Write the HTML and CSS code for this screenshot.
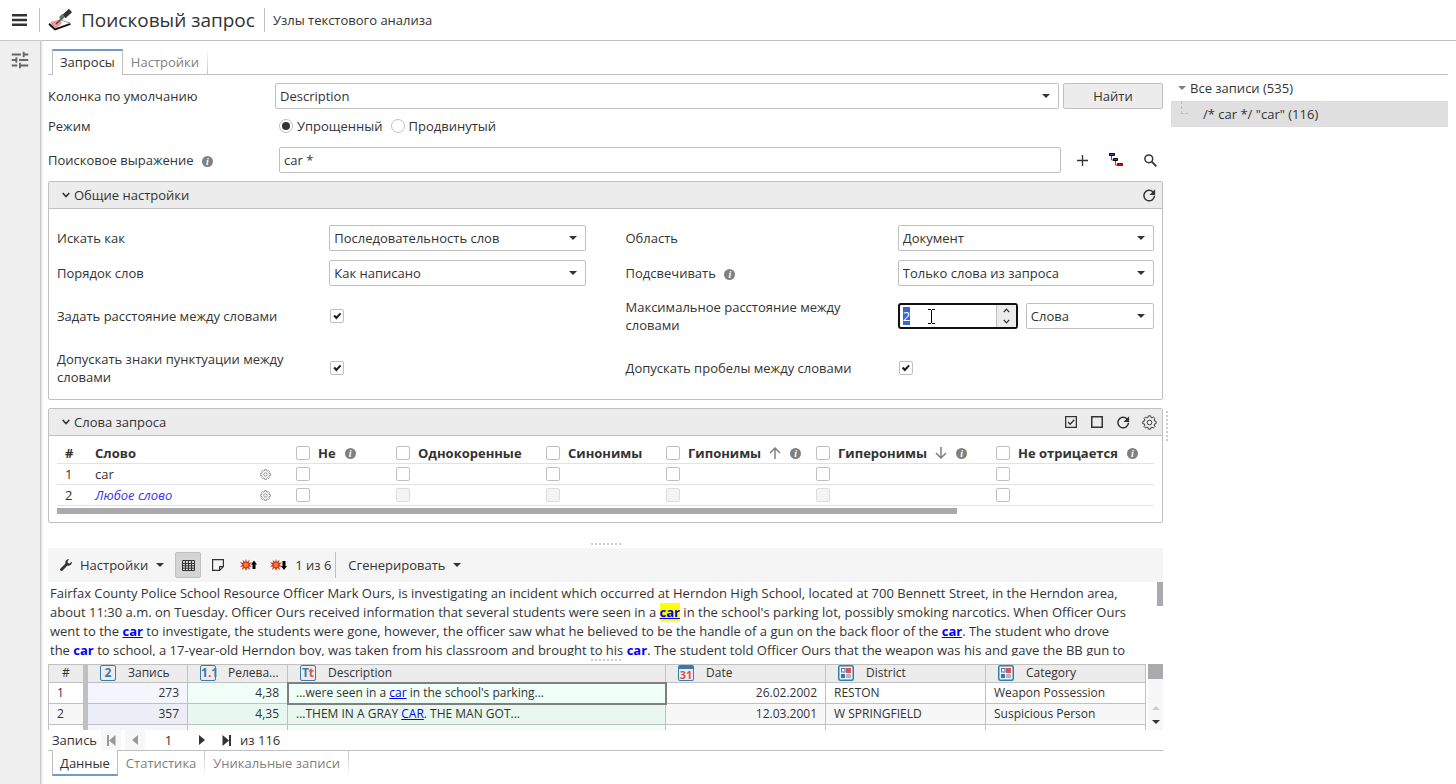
FILE: index.html
```html
<!DOCTYPE html>
<html lang="ru">
<head>
<meta charset="utf-8">
<title>Поисковый запрос</title>
<link rel="stylesheet" href="styles.css">
</head>
<body>
<svg class="sprite" aria-hidden="true">
  <symbol id="arrow" viewBox="0 0 8 4"><path d="M0 0h8L4 4z"/></symbol>
  <symbol id="chevron" viewBox="0 0 8 6"><path d="M.7 1l3.3 3.6L7.3 1" fill="none" stroke="currentColor" stroke-width="1.6"/></symbol>
  <symbol id="refresh" viewBox="0 0 24 24"><path d="M20 12.5a8.5 8.5 0 1 1-2.6-6.6l1.2 1.3" fill="none" stroke="currentColor" stroke-width="2.4"/><path d="M21 2v9h-9z"/></symbol>
  <symbol id="gear" viewBox="0 0 16 16"><g fill="none" stroke="currentColor"><path d="M6.46 2.62L6.75.91H9.25L9.54 2.62L10.71 3.11L12.13 2.1L13.9 3.87L12.89 5.29L13.38 6.46L15.09 6.75V9.25L13.38 9.54L12.89 10.71L13.9 12.13L12.13 13.9L10.71 12.89L9.54 13.38L9.25 15.09H6.75L6.46 13.38L5.29 12.89L3.87 13.9L2.1 12.13L3.11 10.71L2.62 9.54L.91 9.25V6.75L2.62 6.46L3.11 5.29L2.1 3.87L3.87 2.1L5.29 3.11Z"/><circle cx="8" cy="8" r="2.5"/></g></symbol>
  <symbol id="burst" viewBox="0 0 12 12"><path d="M6 0l1 3 2.6-2.4-.8 3.2L12 3.4 9.6 5.8 12 7.4l-3 .4 1.2 3.2L7.2 9 6 12 4.8 9 1.8 11 3 7.8 0 7.6 2.4 5.8 0 3.2l3.2.6L2.6.8 5 3z" fill="#d03a2c"/><circle cx="6" cy="6" r="2.2" fill="#f58220"/></symbol>
  <symbol id="category" viewBox="0 0 16 16"><rect x=".75" y=".75" width="14.5" height="14.5" rx="1.5" fill="#eef3f7" stroke="#3c7aa9" stroke-width="1.5"/><rect x="3.5" y="3.5" width="3.5" height="3.5" fill="#fff" stroke="#3c7aa9"/><path d="M8 3h5v5H8z" fill="#d9534f"/><path d="M3 9h4v4H3z" fill="#3c7aa9"/><path d="M8 9h5v4H8z" fill="#a3bccf"/></symbol>
</svg>

<header class="topbar">
  <button class="menu" aria-label="Меню"><svg width="15" height="12" viewBox="0 0 15 12"><path d="M0 0h15v2.4H0zM0 4.8h15v2.4H0zM0 9.6h15V12H0z"/></svg></button>
  <svg class="logo" width="24" height="24" viewBox="0 0 24 24">
    <path d="M4 14L14 12.500L22 15 9 20.500 1 16z" fill="#fff" stroke="#888" stroke-width=".8"/>
    <path d="M5 13l7-1 2 3-5 5-7-3z" fill="#e99a96"/>
    <path d="M1 16l6 5.400L22.500 16" fill="none" stroke="#111" stroke-width="1.800"/>
    <path d="M22.500 2.500L16 8.500" stroke="#333" stroke-width="4.500"/>
    <path d="M15.500 7.500l-3 3" stroke="#5b7a58" stroke-width="4"/>
    <path d="M14 10L8 16" stroke="#444" stroke-width="1.500"/>
  </svg>
  <h1 class="title">Поисковый запрос</h1>
  <span class="subtitle">Узлы текстового анализа</span>
</header>

<div class="shell">
  <aside class="rail">
    <button class="rail-btn" aria-label="Параметры"><svg width="22" height="22" viewBox="0 0 24 24"><path d="M3 17v2h6v-2H3zM3 5v2h10V5H3zm10 16v-2h8v-2h-8v-2h-2v6h2zM7 9v2H3v2h4v2h2V9H7zm14 4v-2H11v2h10zm-6-4h2V7h4V5h-4V3h-2v6z"/></svg></button>
  </aside>

  <main class="main">
    <nav class="tabs">
      <button class="tab active">Запросы</button>
      <button class="tab">Настройки</button>
    </nav>

    <div class="columns">
      <section class="work">
        <div class="query">
          <div class="row">
            <label class="row-label" for="column">Колонка по умолчанию</label>
            <span class="select"><select id="column"><option>Description</option></select><svg width="8" height="4"><use href="#arrow"/></svg></span>
            <button class="find">Найти</button>
          </div>
          <div class="row modes">
            <span class="row-label">Режим</span>
            <label class="radio"><input type="radio" name="mode" checked>Упрощенный</label>
            <label class="radio"><input type="radio" name="mode">Продвинутый</label>
          </div>
          <div class="row expression">
            <label class="row-label" for="expr">Поисковое выражение <span class="info">i</span></label>
            <input class="text" id="expr" type="text" value="car *">
            <button class="icon-btn" aria-label="Добавить"><svg width="11" height="11" viewBox="0 0 11 11"><path d="M5.500 0v11M0 5.500h11" stroke="currentColor" stroke-width="1.300"/></svg></button>
            <button class="icon-btn" aria-label="Дерево"><svg width="14" height="14" viewBox="0 0 14 14"><path d="M2.500 3v4h4M6.500 8v4h3" fill="none" stroke="#a33a10"/><path d="M.5.5h5v2h-5zM4.500 5.500h4v2h-4z" fill="#1c4fc4" stroke="#000"/><path d="M8.500 10.500h5v2h-5z" fill="red" stroke="#700"/></svg></button>
            <button class="icon-btn" aria-label="Поиск"><svg width="13" height="13" viewBox="0 0 13 13" fill="none" stroke="currentColor"><circle cx="4.800" cy="4.800" r="3.900" stroke-width="1.500"/><path d="M7.700 7.700l4.600 4.600" stroke-width="1.800"/></svg></button>
          </div>

          <section class="panel">
            <header class="panel-head">
              <button class="fold"><svg width="8" height="6"><use href="#chevron"/></svg>Общие настройки</button>
              <button class="icon-btn" aria-label="Сбросить"><svg width="15" height="15"><use href="#refresh"/></svg></button>
            </header>
            <div class="fields">
              <div class="field"><label for="how">Искать как</label><div class="control"><span class="select"><select id="how"><option>Последовательность слов</option></select><svg width="8" height="4"><use href="#arrow"/></svg></span></div></div>
              <div class="field"><label for="scope">Область</label><div class="control"><span class="select"><select id="scope"><option>Документ</option></select><svg width="8" height="4"><use href="#arrow"/></svg></span></div></div>
              <div class="field"><label for="order">Порядок слов</label><div class="control"><span class="select"><select id="order"><option>Как написано</option></select><svg width="8" height="4"><use href="#arrow"/></svg></span></div></div>
              <div class="field"><label for="mark">Подсвечивать <span class="info">i</span></label><div class="control"><span class="select"><select id="mark"><option>Только слова из запроса</option></select><svg width="8" height="4"><use href="#arrow"/></svg></span></div></div>
              <div class="field"><label for="dist">Задать расстояние между словами</label><div class="control"><input id="dist" type="checkbox" checked></div></div>
              <div class="field"><label for="max">Максимальное расстояние между словами</label><div class="control">
                <span class="spinner"><input id="max" type="text" inputmode="numeric" value="2" size="1" autofocus>
                  <svg class="ibeam" width="7" height="15" viewBox="0 0 7 15"><path d="M0 .5h3M4 .5h3M0 14.500h3M4 14.500h3M3.500 1v13" stroke="#000" fill="none"/></svg>
                  <span class="steps"><button aria-label="Больше"><svg class="flip" width="7" height="5"><use href="#chevron"/></svg></button><button aria-label="Меньше"><svg width="7" height="5"><use href="#chevron"/></svg></button></span>
                </span>
                <span class="select"><select aria-label="Единица"><option>Слова</option></select><svg width="8" height="4"><use href="#arrow"/></svg></span>
              </div></div>
              <div class="field"><label for="punct">Допускать знаки пунктуации между словами</label><div class="control"><input id="punct" type="checkbox" checked></div></div>
              <div class="field"><label for="space">Допускать пробелы между словами</label><div class="control"><input id="space" type="checkbox" checked></div></div>
            </div>
          </section>

          <section class="panel">
            <header class="panel-head">
              <button class="fold"><svg width="8" height="6"><use href="#chevron"/></svg>Слова запроса</button>
              <button class="icon-btn" aria-label="Выбрать все"><svg width="12" height="12" viewBox="0 0 12 12" fill="none" stroke="currentColor" stroke-width="1.300"><path d="M.65.65h10.700v10.700H.65zM3 6l2.200 2.200L9.300 3.800"/></svg></button>
              <button class="icon-btn" aria-label="Снять выбор"><svg width="12" height="12" viewBox="0 0 12 12" fill="none" stroke="currentColor" stroke-width="1.500"><path d="M.75.75h10.500v10.500H.75z"/></svg></button>
              <button class="icon-btn" aria-label="Сбросить слова"><svg width="15" height="15"><use href="#refresh"/></svg></button>
              <button class="icon-btn" aria-label="Настройки слов"><svg width="15" height="15"><use href="#gear"/></svg></button>
            </header>
            <div class="words-wrap">
              <table class="words">
                <colgroup><col class="w-num"><col class="w-word"><col class="w-100"><col class="w-150"><col class="w-120"><col class="w-150"><col class="w-180"><col></colgroup>
                <thead><tr>
                  <th>#</th><th>Слово</th>
                  <th><label><input type="checkbox">Не <span class="info">i</span></label></th>
                  <th><label><input type="checkbox">Однокоренные</label></th>
                  <th><label><input type="checkbox">Синонимы</label></th>
                  <th><label><input type="checkbox">Гипонимы <svg class="dir" width="12" height="12" viewBox="0 0 12 12"><path d="M6 12V1M1 6l5-5 5 5"/></svg><span class="info">i</span></label></th>
                  <th><label><input type="checkbox">Гиперонимы <svg class="dir" width="12" height="12" viewBox="0 0 12 12"><path d="M6 0v11M1 6l5 5 5-5"/></svg><span class="info">i</span></label></th>
                  <th><label><input type="checkbox">Не отрицается <span class="info">i</span></label></th>
                </tr></thead>
                <tbody>
                  <tr><td>1</td><td><span class="word">car<button aria-label="Настроить"><svg width="11" height="11"><use href="#gear"/></svg></button></span></td><td><input type="checkbox" aria-label="Не"></td><td><input type="checkbox" aria-label="Однокоренные"></td><td><input type="checkbox" aria-label="Синонимы"></td><td><input type="checkbox" aria-label="Гипонимы"></td><td><input type="checkbox" aria-label="Гиперонимы"></td><td><input type="checkbox" aria-label="Не отрицается"></td></tr>
                  <tr><td>2</td><td><span class="word"><i class="any">Любое слово</i><button aria-label="Настроить"><svg width="11" height="11"><use href="#gear"/></svg></button></span></td><td><input type="checkbox" aria-label="Не"></td><td><input type="checkbox" aria-label="Однокоренные" disabled></td><td><input type="checkbox" aria-label="Синонимы" disabled></td><td><input type="checkbox" aria-label="Гипонимы" disabled></td><td><input type="checkbox" aria-label="Гиперонимы" disabled></td><td><input type="checkbox" aria-label="Не отрицается"></td></tr>
                </tbody>
              </table>
              <div class="hscroll"></div>
            </div>
          </section>
        </div>

        <div class="splitter"></div>

        <div class="toolbar">
          <button class="tool"><svg width="12" height="12" viewBox="0 0 12 12"><path d="M11.700 2.600L9.800 4.500 7.900 4 7.500 2.200 9.400.3A3.300 3.300 0 0 0 5.500 4.600L.5 9.400a1.200 1.200 0 0 0 2 2l5-4.800a3.300 3.300 0 0 0 4.200-4z"/></svg>Настройки<svg width="8" height="4"><use href="#arrow"/></svg></button>
          <button class="icon-btn pressed" aria-label="Таблица"><svg width="13" height="11" viewBox="0 0 13 11" fill="none" stroke="currentColor"><path d="M.5.5h12v10H.5zM.5 3.500h12M.5 5.800h12M.5 8.200h12M3.500.5v10M6.500.5v10M9.500.5v10"/></svg></button>
          <button class="icon-btn" aria-label="Заметка"><svg width="12" height="12" viewBox="0 0 12 12" fill="none" stroke="currentColor" stroke-width="1.200"><path d="M.6.6h10.800v7L7.600 11.400h-7zM11.400 7.600H7.600v3.800"/></svg></button>
          <button class="icon-btn" aria-label="Предыдущее"><svg width="17" height="12" viewBox="0 0 17 12"><use href="#burst" width="12" height="12"/><path d="M14 1.500l3 4h-1.500V10h-3V5.500H11z" fill="#000"/></svg></button>
          <button class="icon-btn" aria-label="Следующее"><svg width="17" height="12" viewBox="0 0 17 12"><use href="#burst" width="12" height="12"/><path d="M14 11l3-4h-1.500V2h-3v5H11z" fill="#000"/></svg></button>
          <span class="count">1 из 6</span>
          <button class="tool gen">Сгенерировать<svg width="8" height="4"><use href="#arrow"/></svg></button>
        </div>

        <div class="document">
          <p>Fairfax County Police School Resource Officer Mark Ours, is investigating an incident which occurred at Herndon High School, located at 700 Bennett Street, in the Herndon area, about 11:30 a.m. on Tuesday. Officer Ours received information that several students were seen in a <a class="current" href="#">car</a> in the school's parking lot, possibly smoking narcotics. When Officer Ours went to the <a href="#">car</a> to investigate, the students were gone, however, the officer saw what he believed to be the handle of a gun on the back floor of the <a href="#">car</a>. The student who drove the <a href="#">car</a> to school, a 17-year-old Herndon boy, was taken from his classroom and brought to his <a href="#">car</a>. The student told Officer Ours that the weapon was his and gave the BB gun to</p>
          <div class="vthumb"></div>
        </div>

        <div class="splitter"></div>

        <div class="results">
          <div class="grid-wrap">
            <table class="grid">
              <colgroup><col class="g-num"><col class="w-100"><col class="w-100"><col><col class="w-160"><col class="w-160"><col class="w-160"></colgroup>
              <thead><tr>
                <th>#</th>
                <th><span class="head"><b class="type">2</b><span>Запись</span></span></th>
                <th><span class="head"><b class="type">1<em>.</em>1</b><span>Релева...</span></span></th>
                <th><span class="head"><b class="type">T<em>t</em></b><span>Description</span></span></th>
                <th><span class="head"><b class="type date">31</b><span>Date</span></span></th>
                <th><span class="head"><svg width="16" height="16"><use href="#category"/></svg><span>District</span></span></th>
                <th><span class="head"><svg width="16" height="16"><use href="#category"/></svg><span>Category</span></span></th>
              </tr></thead>
              <tbody>
                <tr><td>1</td><td>273</td><td>4,38</td><td class="focus">...were seen in a <a href="#">car</a> in the school's parking...</td><td>26.02.2002</td><td>RESTON</td><td>Weapon Possession</td></tr>
                <tr><td>2</td><td>357</td><td>4,35</td><td>...THEM IN A GRAY <a href="#">CAR</a>. THE MAN GOT...</td><td>12.03.2001</td><td>W SPRINGFIELD</td><td>Suspicious Person</td></tr>
                <tr><td></td><td></td><td></td><td></td><td></td><td></td><td></td></tr>
              </tbody>
            </table>
          </div>
          <div class="vscroll"><div class="thumb"></div><svg class="flip faded" width="8" height="4"><use href="#arrow"/></svg><svg width="8" height="4"><use href="#arrow"/></svg></div>
        </div>

        <div class="pager">
          <label for="page">Запись</label>
          <button disabled aria-label="Первая"><svg width="9" height="11" viewBox="0 0 9 11"><path d="M0 0h2v11H0zM8.500 0v11L2 5.500z"/></svg></button>
          <button disabled aria-label="Назад"><svg width="6" height="10" viewBox="0 0 6 10"><path d="M6 0v10L0 5z"/></svg></button>
          <input id="page" type="text" value="1" size="1">
          <button aria-label="Вперед"><svg width="6" height="10" viewBox="0 0 6 10"><path d="M0 0v10l6-5z"/></svg></button>
          <button aria-label="Последняя"><svg width="9" height="11" viewBox="0 0 9 11"><path d="M7 0h2v11H7zM.5 0v11L7 5.500z"/></svg></button>
          <span>из 116</span>
        </div>

        <nav class="tabs bottom">
          <button class="tab active">Данные</button>
          <button class="tab">Статистика</button>
          <button class="tab">Уникальные записи</button>
        </nav>
      </section>

      <div class="splitter vertical"></div>

      <aside class="tree">
        <div class="node"><svg width="8" height="4"><use href="#arrow"/></svg>Все записи (535)</div>
        <div class="node leaf"><span class="branch"></span>/* car */ "car" (116)</div>
      </aside>
    </div>
  </main>
</div>
<script src="main.js"></script>
</body>
</html>
```

FILE: main.js
```js
const distance = document.getElementById('max');
distance.focus();
distance.select();
```

FILE: styles.css
```css
* { box-sizing: border-box; }

body {
  margin: 0;
  height: 100vh;
  display: flex;
  flex-direction: column;
  background: #fff;
  color: #333;
  fill: currentColor;
  font: 13px/18px "Open Sans", "Noto Sans", sans-serif;
}

button, input, select { font: inherit; color: inherit; }
button { border: 0; padding: 0; background: none; fill: currentColor; }
svg { flex: none; display: block; }
.sprite { position: absolute; width: 0; height: 0; }
.flip { transform: scaleY(-1); }

/* top bar */
.topbar {
  flex: none;
  display: flex;
  align-items: center;
  height: 41px;
  border-bottom: 1px solid #c0c0c0;
}
.menu { width: 40px; height: 24px; padding-left: 12px; border-right: 1px solid #c0c0c0; }
.logo { margin: 0 9px 0 8px; }
.title { margin: 0; padding-right: 9px; font-size: 19px; line-height: 24px; font-weight: 400; border-right: 1px solid #c0c0c0; }
.subtitle { padding-left: 8px; }

.shell { flex: 1; min-height: 0; display: flex; }
.rail {
  flex: none;
  width: 41px;
  background: #efefef;
  border-right: 1px solid #c8c8c8;
  box-shadow: 1px 0 2px #ddd;
}
.rail-btn { width: 40px; height: 38px; display: grid; place-items: center; color: #666; }

.main { flex: 1; min-width: 0; display: flex; flex-direction: column; padding: 8px 8px 8px 7px; }

/* tabs */
.tabs {
  flex: none;
  display: flex;
  height: 26px;
  padding-left: 4px;
  background: linear-gradient(#c0c0c0, #c0c0c0) bottom / 100% 1px no-repeat;
}
.tab {
  padding: 0 8px;
  color: #808080;
  border-right: 1px solid;
  border-image: linear-gradient(#fff, #c0c0c0) 1;
}
.tab.active {
  padding: 0 7px 2px;
  color: #333;
  background: #fff;
  border: 1px solid #c0c0c0;
  border-image: none;
  border-top: 2px solid #6f9bc8;
  border-bottom: 0;
}
.tabs.bottom { background-position: top; }
.bottom .tab { border-image: linear-gradient(#c0c0c0, #fff) 1; }
.bottom .tab.active { padding: 2px 7px 0; border-image: none; border-top: 0; border-bottom: 2px solid #6f9bc8; }

.columns { flex: 1; min-height: 0; display: flex; }
.work { flex: 1; min-width: 0; display: flex; flex-direction: column; }
.query { flex: 1; min-height: 0; overflow: hidden; padding-top: 8px; }

/* splitters */
.splitter { flex: none; height: 8px; display: grid; place-items: center; }
.splitter::before {
  content: "";
  width: 30px;
  height: 2px;
  background: repeating-linear-gradient(90deg, #ccc 0 2px, #fff 2px 4px);
}
.splitter.vertical { width: 8px; height: auto; }
.splitter.vertical::before {
  width: 2px;
  height: 30px;
  background: repeating-linear-gradient(#ccc 0 2px, #fff 2px 4px);
}

/* controls */
.select { flex: 1; min-width: 0; display: grid; align-items: center; }
.select select, .text {
  width: 100%;
  height: 26px;
  padding: 0 4px;
  border: 1px solid #c0c0c0;
  border-radius: 2px;
  background: #fff;
  appearance: none;
}
.select select, .select svg { grid-area: 1 / 1; }
.select svg { justify-self: end; margin-right: 9px; pointer-events: none; }
.text { flex: 1; width: auto; min-width: 0; }

.find { width: 100px; height: 26px; border: 1px solid #c0c0c0; border-radius: 2px; background: #ececec; }
.icon-btn { flex: none; width: 26px; height: 26px; display: grid; place-items: center; }

input[type="checkbox"], input[type="radio"] {
  appearance: none;
  flex: none;
  display: grid;
  width: 14px;
  height: 14px;
  margin: 0;
  border: 1px solid #c0c0c0;
  border-radius: 2px;
  background: #fff;
}
input[type="radio"] { border-radius: 50%; place-items: center; }
input[type="radio"]:checked::before { content: ""; width: 8px; height: 8px; border-radius: 50%; background: #333; }
input[type="checkbox"]:checked::before {
  content: "";
  background: #222;
  clip-path: polygon(17% 52%, 30% 39%, 43% 52%, 72% 22%, 84% 34%, 43% 80%);
}
input[type="checkbox"]:disabled { background: #f4f4f4; border-color: #dcdcdc; }

.info {
  display: inline-block;
  width: 11px;
  height: 11px;
  margin-left: 5px;
  border-radius: 50%;
  background: #808080;
  color: #fff;
  font: italic bold 10px/11px "Liberation Serif", serif;
  text-align: center;
}

/* query form */
.row { display: flex; align-items: center; gap: 4px; }
.row-label { flex: none; width: 223px; }
.modes { height: 34px; gap: 8px; }
.radio { display: flex; align-items: center; gap: 4px; }
.expression { gap: 8px; margin: 4px 0 8px; }

.panel { border: 1px solid #c0c0c0; border-radius: 2px; margin-bottom: 8px; }
.panel-head { display: flex; align-items: center; height: 27px; background: #ececec; border-bottom: 1px solid #c0c0c0; }
.fold { margin-right: auto; display: flex; align-items: center; gap: 4px; padding-left: 13px; }

.fields {
  display: grid;
  grid-template: 26px 26px minmax(42px, auto) minmax(44px, auto) / 1fr 1fr;
  gap: 9px 40px;
  padding: 16px 8px 9px;
}
.field { display: grid; grid-template-columns: 272fr 256fr; align-items: center; }
.field > label { padding-right: 32px; }
.control { min-width: 0; display: flex; align-items: center; gap: 8px; }
.control > input { margin-left: 1px; }

.spinner {
  position: relative;
  flex: none;
  width: 120px;
  height: 26px;
  display: flex;
  border: 2px solid #111;
  border-radius: 3px;
  background: #fff;
}
.spinner input { flex: 1; min-width: 0; padding: 0 3px; border: 0; outline: 0; background: none; }
.spinner input::selection { background: #3367d1; color: #fff; }
.steps { display: flex; flex-direction: column; width: 20px; background: #ececec; border-left: 1px solid #c0c0c0; }
.steps button { flex: 1; display: grid; place-items: center; }
.ibeam { position: absolute; left: 28px; top: 4px; pointer-events: none; }

/* query words */
.words-wrap { padding: 7px 8px 8px; }
table { border-spacing: 0; table-layout: fixed; width: 100%; text-align: left; }
.w-num { width: 33px; }
.w-word { width: 201px; }
.w-100 { width: 100px; }
.w-120 { width: 120px; }
.w-150 { width: 150px; }
.w-160 { width: 160px; }
.w-180 { width: 180px; }
.words th, .words td { height: 21px; padding: 0 5px; border-bottom: 1px solid #dde2ee; white-space: nowrap; }
.words tr > :first-child { padding-left: 8px; }
.words label { display: flex; align-items: center; }
.words label input { margin-right: 8px; }
.words .info { margin-left: 9px; }
.dir { margin-left: 8px; fill: none; stroke: #808080; stroke-width: 1.5; }
.word { display: flex; align-items: center; justify-content: space-between; padding-right: 15px; }
.word button { color: #666; }
.any { color: #3a32f0; }
.hscroll { width: 82%; height: 6px; margin-top: 2px; background: #a9a9ae; }

/* document viewer */
.toolbar { flex: none; display: flex; align-items: center; gap: 4px; height: 34px; background: #f5f5f5; }
.tool { height: 26px; display: flex; align-items: center; gap: 8px; padding: 0 7px 0 12px; }
.gen { border-left: 1px solid #c0c0c0; }
.pressed { background: #d4d4d4; border: 1px solid #c0c0c0; border-radius: 2px; }

.document { flex: none; display: flex; height: 74px; overflow: hidden; }
.document p { flex: 1; margin: 0; padding: 2px 30px 0 2px; line-height: 19px; }
.document a { font-weight: 700; }
a { color: #00f; }
.document .current { background: #ff0; }
.vthumb { flex: none; width: 6px; height: 24px; background: #a9a9ae; }

/* results */
.results { flex: none; display: flex; gap: 2px; height: 66px; }
.grid-wrap { flex: 1; min-width: 0; overflow: hidden; border-top: 1px solid #c0c0c0; border-left: 1px solid #c0c0c0; }
.g-num { width: 39px; }
.grid th, .grid td {
  height: 21px;
  padding: 0 8px;
  font-size: 12px;
  line-height: 18px;
  border-right: 1px solid #c0c0c0;
  border-bottom: 1px solid #c0c0c0;
  white-space: nowrap;
  overflow: hidden;
}
.grid th { height: 18px; background: #ececec; font-weight: 400; padding: 0 12px; line-height: 16px; vertical-align: top; }
.grid tr > :first-child { border-right: 5px solid #c0c0c0; }
.grid th:first-child { text-align: center; padding: 0; }
.grid tr:nth-child(even) td { background: #f7f7f7; }
.grid td:nth-child(2) { background: #f5f5ff; text-align: right; }
.grid td:nth-child(3), .grid td:nth-child(4) { background: #f0fff8; }
.grid td:nth-child(3), .grid td:nth-child(5) { text-align: right; }
.grid tr:nth-child(even) td:nth-child(2) { background: #ededf7; }
.grid tr:nth-child(even) td:nth-child(3), .grid tr:nth-child(even) td:nth-child(4) { background: #e8f7f0; }
.grid .focus { outline: 2px solid #808080; outline-offset: -1px; }
.head { display: flex; align-items: center; gap: 12px; height: 16px; }
.type {
  flex: none;
  width: 16px;
  height: 16px;
  border: 1px solid #3c7aa9;
  border-radius: 2px;
  color: #3c7aa9;
  font-size: 12px;
  line-height: 14px;
  text-align: center;
}
.type em { font-style: normal; color: #d9534f; }
.type.date { color: #d9534f; border-top-width: 4px; font-size: 11px; line-height: 11px; }

.vscroll { flex: none; width: 15px; display: flex; flex-direction: column; align-items: center; gap: 10px; padding-bottom: 6px; background: #f7f7f7; }
.vscroll .thumb { width: 100%; height: 15px; margin-bottom: auto; background: #a9a9ae; }
.faded { fill: #ccc; }

.pager { flex: none; display: flex; align-items: center; gap: 4px; height: 20px; padding-left: 4px; }
.pager button { width: 20px; height: 20px; display: grid; place-items: center; }
.pager button:disabled { color: #999; background: #f7f7f7; }
.pager input { width: 39px; height: 20px; padding: 0; border: 0; background: none; text-align: center; }

/* records tree */
.tree { flex: none; width: 277px; }
.node { display: flex; align-items: center; gap: 4px; height: 26px; padding-left: 7px; }
.node svg { fill: #808080; }
.leaf { background: #dfdfdf; padding-left: 10px; gap: 15px; }
.branch { width: 7px; height: 13px; margin-bottom: 13px; border-left: 1px dashed #bbb; border-bottom: 1px dashed #bbb; }
```
